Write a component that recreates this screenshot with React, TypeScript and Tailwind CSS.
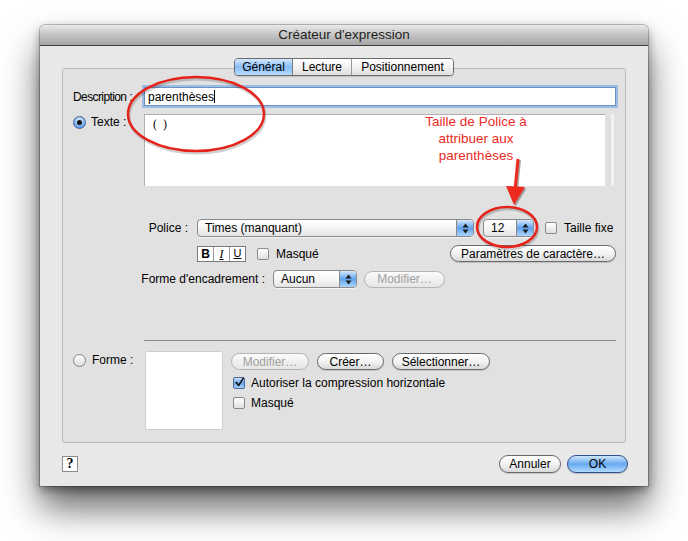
import React from "react"

const FONT = "font-['Lucida_Grande','Liberation_Sans',Arial,sans-serif]"

function Arrows() {
  return (
    <svg width="7" height="11" viewBox="0 0 7 11">
      <polygon points="0.5,4.5 3.5,0.5 6.5,4.5" fill="#1c1c1c" />
      <polygon points="0.5,6.5 3.5,10.5 6.5,6.5" fill="#1c1c1c" />
    </svg>
  )
}

function Popup({ label, className }: { label: string; className: string }) {
  return (
    <div className={`h-[18px] rounded-[4px] border border-[#8a8a8a] bg-gradient-to-b from-white via-[#f6f6f6] to-[#e4e4e4] flex overflow-hidden shadow-[0_1px_0_rgba(255,255,255,0.6)] ${className}`}>
      <span className="flex-1 pl-[7px] text-[12px] leading-[16px] text-black whitespace-nowrap">{label}</span>
      <span className="w-[17px] h-full border-l border-[#8a8a8a] bg-gradient-to-b from-[#d6e9fc] via-[#5fa2ea] to-[#acd5fc] flex items-center justify-center">
        <Arrows />
      </span>
    </div>
  )
}

function Button({ label, className, disabled }: { label: string; className: string; disabled?: boolean }) {
  return (
    <div
      className={`h-[17px] rounded-full border flex items-center justify-center text-[12px] leading-none whitespace-nowrap ${
        disabled
          ? "border-[#b4b4b4] bg-gradient-to-b from-[#fbfbfb] to-[#e6e6e6] text-[#a0a0a0]"
          : "border-[#6a6a6a] bg-gradient-to-b from-white via-[#f3f3f3] to-[#d9d9d9] text-black shadow-[0_1px_1px_rgba(0,0,0,0.15)]"
      } ${className}`}
    >
      {label}
    </div>
  )
}

function Checkbox({ checked }: { checked?: boolean }) {
  if (checked) {
    return (
      <span className="w-[12px] h-[12px] rounded-[2px] border border-[#4a6a9a] bg-gradient-to-b from-[#cfe3fb] via-[#6aa8ee] to-[#a8d2fb] flex items-center justify-center shrink-0">
        <svg width="11" height="11" viewBox="0 0 11 11" className="-mt-[2px] ml-[1px]">
          <path d="M1.5 5.5 L4.5 9 L10 0.5" stroke="#111" strokeWidth="2" fill="none" strokeLinecap="round" strokeLinejoin="round" />
        </svg>
      </span>
    )
  }
  return <span className="w-[12px] h-[12px] rounded-[2px] border border-[#8a8a8a] bg-gradient-to-b from-white to-[#e0e0e0] shrink-0" />
}

function Radio({ checked }: { checked?: boolean }) {
  if (checked) {
    return (
      <span className="w-[13px] h-[13px] rounded-full border border-[#46628f] bg-[radial-gradient(circle_at_50%_30%,#e3f1ff,#5d9ee8_75%)] flex items-center justify-center shrink-0">
        <span className="w-[5px] h-[5px] rounded-full bg-[#151515]" />
      </span>
    )
  }
  return <span className="w-[13px] h-[13px] rounded-full border border-[#858585] bg-gradient-to-b from-white to-[#dcdcdc] shrink-0" />
}

export default function App() {
  return (
    <div className={`relative w-[688px] h-[541px] bg-white overflow-hidden text-black ${FONT}`}>
      <div className="pl-[40px] pt-[25px]">
        {/* Window */}
        <div className="w-[608px] h-[461px] bg-[#e8e8e8] rounded-t-[5px] shadow-[0_0_0_1px_rgba(0,0,0,0.22),0_4px_10px_rgba(0,0,0,0.4),0_22px_36px_rgba(0,0,0,0.6)] flex flex-col">
          {/* Title bar */}
          <div className="h-[21px] rounded-t-[5px] border-b border-[#3e3e3e] bg-gradient-to-b from-[#e9e9e9] via-[#c4c4c4] to-[#a4a4a4] flex items-center justify-center text-[13.5px] text-[#1e1e1e]">
            Créateur d'expression
          </div>

          {/* Tabs */}
          <div className="pt-[12px] flex justify-center relative z-10">
            <div className="h-[18px] flex rounded-[4px] border border-[#6c6c6c] overflow-hidden text-[12px] leading-[16px] shadow-[0_1px_1px_rgba(0,0,0,0.15)]">
              <div className="w-[58px] text-center bg-gradient-to-b from-[#d4e8fc] via-[#86bdf3] to-[#b7dcff] border-r border-[#7d7d7d]">Général</div>
              <div className="w-[59px] text-center bg-gradient-to-b from-white via-[#f3f3f3] to-[#dedede] border-r border-[#9a9a9a]">Lecture</div>
              <div className="w-[101px] text-center bg-gradient-to-b from-white via-[#f3f3f3] to-[#dedede]">Positionnement</div>
            </div>
          </div>

          {/* Group box */}
          <div className="mx-[22px] -mt-[8px] h-[375px] rounded-[3px] border border-[#b9b9b9] bg-[#e1e1e1] text-[12px]">
            {/* Description */}
            <div className="mt-[18px] pl-[10px] pr-[9px] flex items-center">
              <span className="w-[71px] whitespace-nowrap tracking-[-0.6px]">Description :</span>
              <div className="flex-1 h-[19px] bg-white border border-[#6f8fc0] shadow-[0_0_0_2px_#9bbde6] pl-[3px] flex items-center">
                <span>parenthèses</span>
                <span className="w-px h-[13px] bg-black" />
              </div>
            </div>

            {/* Texte */}
            <div className="mt-[8px] pl-[10px] pr-[9px] flex items-start">
              <div className="w-[71px] flex items-center gap-[5px] -mt-[1px]">
                <Radio checked />
                <span>Texte :</span>
              </div>
              <div className="w-[461px] h-[72px] bg-white border-t border-l border-[#b0b0b0] pl-[8px] font-['Liberation_Serif',serif] text-[12px]">
                (&nbsp;&nbsp;)
              </div>
              <div className="ml-[4px] w-[7px] h-[72px] bg-gradient-to-r from-[#d6d6d6] via-[#f7f7f7] to-[#dadada]" />
            </div>

            {/* Police */}
            <div className="mt-[33px] flex items-center h-[18px]">
              <span className="w-[125px] text-right">Police :</span>
              <Popup label="Times (manquant)" className="ml-[9px] w-[277px]" />
              <Popup label="12" className="ml-[9px] w-[51px]" />
              <span className="ml-[11px] flex"><Checkbox /></span>
              <span className="ml-[7px]">Taille fixe</span>
            </div>

            {/* Style */}
            <div className="mt-[8px] pl-[134px] pr-[9px] flex items-center h-[17px]">
              <div className="flex border border-[#7a7a7a] bg-white h-[16px]">
                <span className="w-[16px] border-r border-[#9a9a9a] flex items-center justify-center font-bold text-[12px]">B</span>
                <span className="w-[16px] border-r border-[#9a9a9a] flex items-center justify-center italic font-['Liberation_Serif',serif] text-[12px] underline">I</span>
                <span className="w-[15px] flex items-center justify-center underline text-[11px]">U</span>
              </div>
              <span className="ml-[11px] flex"><Checkbox /></span>
              <span className="ml-[7px]">Masqué</span>
              <Button label="Paramètres de caractère…" className="ml-auto w-[166px]" />
            </div>

            {/* Forme d'encadrement */}
            <div className="mt-[8px] flex items-center h-[18px]">
              <span className="w-[202px] text-right whitespace-nowrap">Forme d'encadrement :</span>
              <Popup label="Aucun" className="ml-[8px] w-[84px]" />
              <Button label="Modifier…" className="ml-[7px] w-[81px]" disabled />
            </div>

            {/* Separator */}
            <div className="mt-[52px] ml-[81px] mr-[9px] h-px bg-[#8f8f8f]" />

            {/* Forme */}
            <div className="mt-[10px] pl-[10px] flex items-start">
              <div className="w-[72px] flex items-center gap-[6px]">
                <Radio />
                <span>Forme :</span>
              </div>
              <div className="w-[78px] h-[79px] bg-white border border-[#cfcfcf] rounded-[2px]" />
              <div className="ml-[8px] flex flex-col">
                <div className="mt-[2px] flex items-center">
                  <Button label="Modifier…" className="w-[78px]" disabled />
                  <Button label="Créer…" className="ml-[8px] w-[67px]" />
                  <Button label="Sélectionner…" className="ml-[8px] w-[98px]" />
                </div>
                <div className="mt-[7px] pl-[2px] flex items-center h-[12px]">
                  <Checkbox checked />
                  <span className="ml-[6px]">Autoriser la compression horizontale</span>
                </div>
                <div className="mt-[8px] pl-[2px] flex items-center h-[12px]">
                  <Checkbox />
                  <span className="ml-[6px]">Masqué</span>
                </div>
              </div>
            </div>
          </div>

          {/* Bottom row */}
          <div className="mt-[12px] pl-[22px] pr-[20px] flex items-center">
            <div className="w-[16px] h-[16px] border border-[#8a8a8a] bg-white flex items-center justify-center font-['Liberation_Serif',serif] font-bold text-[14px] leading-none">?</div>
            <Button label="Annuler" className="ml-auto w-[62px] h-[18px]" />
            <div className="ml-[6px] w-[61px] h-[18px] rounded-full border border-[#2f5388] bg-gradient-to-b from-[#cfe5fc] via-[#66a9ef] to-[#b2dbff] flex items-center justify-center text-[12px] shadow-[0_1px_1px_rgba(0,0,0,0.2)]">
              OK
            </div>
          </div>
        </div>
      </div>

      {/* Annotation overlay */}
      <div className="absolute left-[406px] top-[113px] w-[140px] text-center text-[13.5px] leading-[17px] text-[#ec2a1e] font-['Liberation_Sans',Arial,sans-serif]">
        Taille de Police à<br />attribuer aux<br />parenthèses
      </div>
      <svg className="absolute left-0 top-0 pointer-events-none" width="688" height="541" viewBox="0 0 688 541">
        <ellipse cx="196" cy="114" rx="68" ry="37" fill="none" stroke="rgba(0,0,0,0.18)" strokeWidth="3" transform="translate(1 2)" />
        <ellipse cx="196" cy="114" rx="68" ry="37" fill="none" stroke="#e5231b" strokeWidth="2.5" />
        <ellipse cx="507" cy="227" rx="30" ry="20" fill="none" stroke="rgba(0,0,0,0.18)" strokeWidth="3" transform="translate(1 2)" />
        <ellipse cx="507" cy="227" rx="30" ry="20" fill="none" stroke="#e5231b" strokeWidth="2.5" />
        <line x1="518" y1="159" x2="515" y2="190" stroke="rgba(0,0,0,0.35)" strokeWidth="3" transform="translate(1.5 1)" />
        <polygon points="506,186 525,187 514,205" fill="rgba(0,0,0,0.3)" transform="translate(1.5 1.5)" />
        <line x1="518" y1="159" x2="515" y2="190" stroke="#ee2a1e" strokeWidth="3" />
        <polygon points="506,186 525,187 514,205" fill="#ee2a1e" />
      </svg>
    </div>
  )
}
